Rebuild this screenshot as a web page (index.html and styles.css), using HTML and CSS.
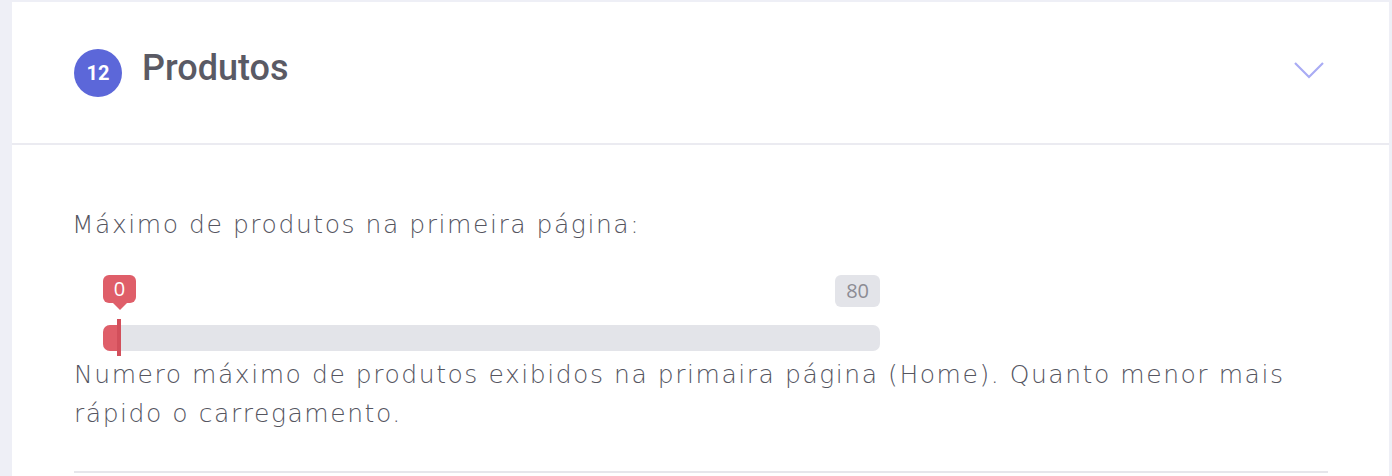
FILE: index.html
```html
<!DOCTYPE html>
<html lang="pt">
<head>
<meta charset="utf-8">
<link rel="stylesheet" href="styles.css">
</head>
<body>
<div class="card">
  <div class="card-header">
    <span class="badge">12</span>
    <h2 class="title">Produtos</h2>
    <svg class="chevron" width="32" height="18" viewBox="0 0 32 18"><path d="M2 2 L16 16 L30 2" fill="none" stroke="#a9acf4" stroke-width="2.2"/></svg>
  </div>
  <div class="card-body">
    <label class="field-label">Máximo de produtos na primeira página:</label>
    <div class="slider">
      <div class="tips">
        <span class="tip tip-value">0</span>
        <span class="tip tip-max">80</span>
      </div>
      <div class="track">
        <div class="fill"></div>
        <div class="handle"></div>
      </div>
    </div>
    <p class="help">Numero máximo de produtos exibidos na primaira página (Home). Quanto menor mais rápido o carregamento.</p>
    <hr class="sep">
  </div>
</div>
</body>
</html>
```
FILE: styles.css
```css
html, body {
  margin: 0;
  padding: 0;
  background: #eeeff6;
  height: 100%;
  overflow: hidden;
}
.card {
  margin: 2px 3px 0 12px;
  background: #ffffff;
  min-height: 480px;
}
.card-header {
  height: 141px;
  border-bottom: 2px solid #ebebf1;
  display: flex;
  align-items: center;
  padding: 0 64px 0 62px;
}
.badge {
  width: 48px;
  height: 48px;
  border-radius: 50%;
  background: #5c67d9;
  color: #fff;
  font-family: Roboto, sans-serif;
  font-weight: 700;
  font-size: 20px;
  display: flex;
  align-items: center;
  justify-content: center;
}
.title {
  margin: 0 0 10px 20px;
  flex: 1;
  font-family: Roboto, sans-serif;
  font-weight: 500;
  font-size: 36px;
  color: #5a5a64;
}
.chevron {
  display: block;
  margin-bottom: 6px;
}
.card-body {
  padding: 61px 61px 0 62px;
  font-family: "DejaVu Sans", sans-serif;
  font-weight: 200;
  color: #55555f;
  font-size: 25px;
  letter-spacing: 1.55px;
}
.field-label {
  display: block;
  line-height: 38px;
  margin-left: -2px;
}
.slider {
  width: 777px;
  margin: 31px 0 0 29px;
  letter-spacing: 0;
}
.tips {
  display: flex;
  justify-content: space-between;
  align-items: flex-start;
  height: 32px;
}
.tip {
  position: relative;
  font-size: 20px;
  line-height: 28px;
  height: 28px;
  padding: 0 9px;
  border-radius: 6px;
  font-family: "Open Sans", sans-serif;
  font-weight: 400;
}
.tip-value {
  background: #df5e69;
  color: #fff;
  width: 15px;
  text-align: center;
}
.tip-value::after {
  content: "";
  position: absolute;
  left: 50%;
  bottom: -7px;
  margin-left: -7px;
  border-left: 7px solid transparent;
  border-right: 7px solid transparent;
  border-top: 7px solid #df5e69;
}
.tip-max {
  background: #e3e4e9;
  color: #8c8c94;
  height: 32px;
  line-height: 32px;
  padding: 0 11px;
}
.track {
  position: relative;
  margin-top: 18px;
  height: 26px;
  border-radius: 7px;
  background: #e3e4e9;
}
.fill {
  width: 16px;
  height: 100%;
  background: #df5e69;
  border-radius: 7px 0 0 7px;
}
.handle {
  position: absolute;
  left: 14px;
  top: -6px;
  width: 4px;
  height: 37px;
  background: #d24f5b;
}
.help {
  margin: 4px 0 0 0;
  line-height: 39px;
}
.sep {
  margin: 38px 0 0 0;
  border: 0;
  border-top: 2px solid #e6e6eb;
}
```
